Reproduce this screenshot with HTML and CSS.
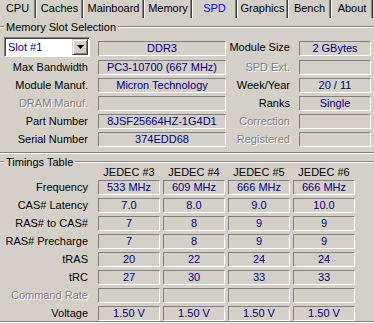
FILE: index.html
```html
<!DOCTYPE html>
<html lang="en">
<head>
  <meta charset="UTF-8">
  <title>CPU-Z SPD</title>
  <link rel="stylesheet" href="styles.css">
</head>
<body>
  <div class="window">
    <div class="tabs">
      <div class="tab tab-cpu">CPU</div>
      <div class="tab tab-caches">Caches</div>
      <div class="tab tab-mainboard">Mainboard</div>
      <div class="tab tab-memory">Memory</div>
      <div class="tab tab-spd active">SPD</div>
      <div class="tab tab-graphics">Graphics</div>
      <div class="tab tab-bench">Bench</div>
      <div class="tab tab-about">About</div>
    </div>

    <div class="group slot-group">
      <div class="group-title"><span>Memory Slot Selection</span></div>
      <div class="slot-grid">
        <div class="select">
          <span class="select-text">Slot #1</span>
          <span class="select-btn">
            <svg width="7" height="4" viewBox="0 0 7 4"><path d="M0 0h7L3.5 4z" fill="#000"/></svg>
          </span>
        </div>
        <div class="field field-top">DDR3</div>
        <div class="label">Module Size</div>
        <div class="field field-top">2 GBytes</div>

        <div class="label">Max Bandwidth</div>
        <div class="field">PC3-10700 (667 MHz)</div>
        <div class="label disabled">SPD Ext.</div>
        <div class="field"></div>

        <div class="label">Module Manuf.</div>
        <div class="field">Micron Technology</div>
        <div class="label">Week/Year</div>
        <div class="field">20 / 11</div>

        <div class="label disabled">DRAM Manuf.</div>
        <div class="field"></div>
        <div class="label">Ranks</div>
        <div class="field">Single</div>

        <div class="label">Part Number</div>
        <div class="field">8JSF25664HZ-1G4D1</div>
        <div class="label disabled">Correction</div>
        <div class="field"></div>

        <div class="label">Serial Number</div>
        <div class="field">374EDD68</div>
        <div class="label disabled">Registered</div>
        <div class="field"></div>
      </div>
    </div>

    <div class="group timing-group">
      <div class="group-title"><span>Timings Table</span></div>
      <div class="timing-grid">
        <div></div>
        <div class="col-head">JEDEC #3</div>
        <div class="col-head">JEDEC #4</div>
        <div class="col-head">JEDEC #5</div>
        <div class="col-head">JEDEC #6</div>

        <div class="label">Frequency</div>
        <div class="field">533 MHz</div>
        <div class="field">609 MHz</div>
        <div class="field">666 MHz</div>
        <div class="field">666 MHz</div>

        <div class="label">CAS# Latency</div>
        <div class="field">7.0</div>
        <div class="field">8.0</div>
        <div class="field">9.0</div>
        <div class="field">10.0</div>

        <div class="label">RAS# to CAS#</div>
        <div class="field">7</div>
        <div class="field">8</div>
        <div class="field">9</div>
        <div class="field">9</div>

        <div class="label">RAS# Precharge</div>
        <div class="field">7</div>
        <div class="field">8</div>
        <div class="field">9</div>
        <div class="field">9</div>

        <div class="label">tRAS</div>
        <div class="field">20</div>
        <div class="field">22</div>
        <div class="field">24</div>
        <div class="field">24</div>

        <div class="label">tRC</div>
        <div class="field">27</div>
        <div class="field">30</div>
        <div class="field">33</div>
        <div class="field">33</div>

        <div class="label disabled">Command Rate</div>
        <div class="field"></div>
        <div class="field"></div>
        <div class="field"></div>
        <div class="field"></div>

        <div class="label">Voltage</div>
        <div class="field">1.50 V</div>
        <div class="field">1.50 V</div>
        <div class="field">1.50 V</div>
        <div class="field">1.50 V</div>
      </div>
    </div>
  </div>
</body>
</html>
```

FILE: styles.css
```css
body {
  margin: 0;
  background: #d4d0c8;
  font-family: "Liberation Sans", Arial, sans-serif;
  font-size: 11px;
  color: #000;
}
.window {
  width: 374px;
  height: 324px;
  overflow: hidden;
  background: #d4d0c8;
}

/* tabs */
.tabs {
  display: flex;
  height: 18px;
}
.tab {
  box-sizing: border-box;
  height: 18px;
  line-height: 16px;
  text-align: center;
  border-left: 1px solid #fff;
  border-right: 1px solid #404040;
  box-shadow: inset -1px 0 #808080;
}
.tab-cpu { width: 36px; border-left: none; }
.tab-caches { width: 47px; }
.tab-mainboard { width: 61px; }
.tab-memory { width: 48px; }
.tab-spd { width: 45px; }
.tab-graphics { width: 51px; }
.tab-bench { width: 43px; }
.tab-about { width: 42px; }
.tab.active {
  color: #0000ff;
}

/* group boxes */
.group {
  border-bottom: 1px solid #808080;
  box-shadow: 0 1px #fff;
}
.group-title {
  display: flex;
  align-items: center;
  height: 13px;
}
.group-title::before,
.group-title::after {
  content: "";
  border-top: 1px solid #808080;
  border-bottom: 1px solid #fff;
}
.group-title::before { width: 4px; margin-right: 2px; }
.group-title::after { flex: 1; margin-left: 2px; }

.slot-group {
  margin-top: 2px;
  padding-bottom: 5px;
}
.timing-group {
  margin-top: 2px;
}

/* labels and value boxes */
.label {
  text-align: right;
  white-space: nowrap;
  line-height: 15px;
}
.disabled {
  color: #808080;
  text-shadow: 1px 1px #fff;
}
.field {
  box-sizing: border-box;
  height: 15px;
  line-height: 13px;
  border: 1px solid;
  border-color: #808080 #fff #fff #808080;
  color: #000080;
  text-align: center;
  white-space: nowrap;
  overflow: hidden;
}
.field-top {
  align-self: start;
  margin-top: 4px;
}

.slot-grid {
  display: grid;
  grid-template-columns: 98px 128px 73px 72px;
  row-gap: 3px;
  padding-top: 4px;
  align-items: center;
}
.slot-grid > .label:nth-child(4n+1) { padding-right: 10px; }
.slot-grid > .label:nth-child(4n+3) { padding-right: 9px; }

.select {
  box-sizing: border-box;
  display: flex;
  align-items: center;
  height: 20px;
  margin-left: 4px;
  margin-right: 8px;
  border: 1px solid;
  border-color: #808080 #fff #fff #808080;
  background: #fff;
  box-shadow: inset 1px 1px #404040;
  color: #000080;
}
.select-text {
  flex: 1;
  padding-left: 3px;
}
.select-btn {
  box-sizing: border-box;
  width: 16px;
  height: 16px;
  margin-right: 1px;
  display: flex;
  align-items: center;
  justify-content: center;
  background: #d4d0c8;
  border: 1px solid;
  border-color: #d4d0c8 #404040 #404040 #d4d0c8;
  box-shadow: inset 1px 1px #fff, inset -1px -1px #808080;
}

.timing-grid {
  display: grid;
  grid-template-columns: 95px 62px 62px 62px 62px;
  column-gap: 3px;
  row-gap: 3px;
}
.timing-grid > .label { padding-right: 7px; }
.col-head {
  text-align: center;
  height: 9px;
  line-height: 9px;
}
```
